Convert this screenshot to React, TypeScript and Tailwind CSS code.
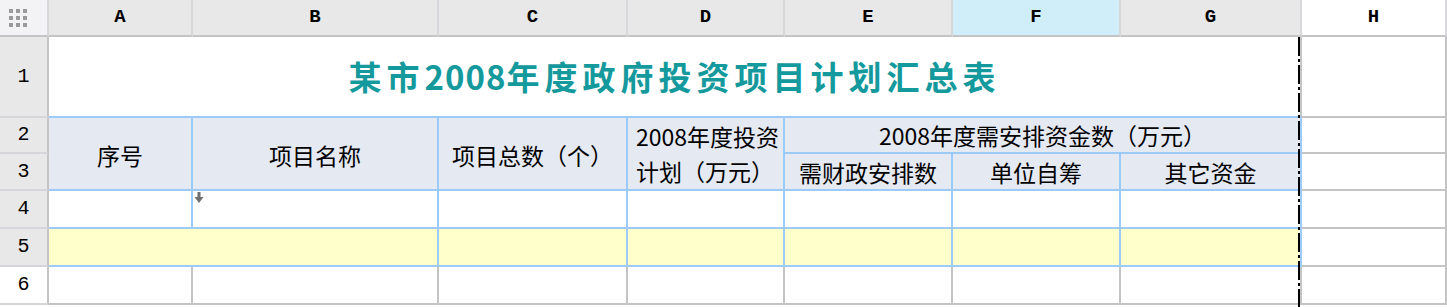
import React from 'react';

const cjk = '"Noto Sans CJK SC", "Noto Sans", sans-serif';
const mono = '"Liberation Mono", "Courier New", monospace';

// column header cells
function ColHead({ label, active, plain }: { label: string; active?: boolean; plain?: boolean }) {
  const bg = active ? 'bg-[#cfeefa]' : plain ? 'bg-white' : 'bg-[#e8e8e8]';
  return (
    <div
      className={`${bg} flex items-center justify-center border-r-2 border-b-2 border-r-[#d8d8dc] border-b-[#c4c4c4] text-[19px] font-bold text-black`}
      style={{ fontFamily: mono }}
    >
      {label}
    </div>
  );
}

function RowHead({ n, white }: { n: number; white?: boolean }) {
  return (
    <div
      className={`${white ? 'bg-white' : 'bg-[#e8e8e8]'} col-start-1 flex items-center justify-center border-r-2 border-b-2 border-r-[#c4c4c4] border-b-[#d6d6da] text-[20px] text-black`}
      style={{ fontFamily: mono, gridRow: n + 1 }}
    >
      {n}
    </div>
  );
}

const blue = 'border-r-2 border-b-2 border-[#9ccbfa]';
const gray = 'border-r-2 border-b-2 border-[#c4c4c4]';
const head = `bg-[#e5e9f2] ${blue} flex items-center justify-center text-[23px] text-black leading-none`;

function DownMark() {
  return (
    <svg width="10" height="12" viewBox="0 0 10 12" className="absolute left-[1px] top-[1px]">
      <rect x="3.5" y="0" width="3" height="6" fill="#6f6f6f" />
      <polygon points="0.5,5 9.5,5 5,11" fill="#6f6f6f" />
    </svg>
  );
}

export default function App() {
  return (
    <div className="relative w-[1447px] h-[307px] overflow-hidden bg-white" style={{ fontFamily: cjk }}>
      <div className="grid grid-cols-[49px_144px_246px_189px_157px_168px_168px_181px_145px_4px] grid-rows-[37px_81px_36px_37px_38px_38px_38px_4px]">
        {/* corner */}
        <div className="bg-[#f3f3f5] flex items-center pl-[9px] border-r-2 border-b-2 border-r-[#d8d8dc] border-b-[#c4c4c4]">
          <div className="grid grid-cols-3 gap-[3px]">
            {Array.from({ length: 9 }).map((_, i) => (
              <div key={i} className="w-[4px] h-[4px] bg-[#9a9a9a]" />
            ))}
          </div>
        </div>
        <ColHead label="A" />
        <ColHead label="B" />
        <ColHead label="C" />
        <ColHead label="D" />
        <ColHead label="E" />
        <ColHead label="F" active />
        <ColHead label="G" />
        <ColHead label="H" plain />
        <div className="bg-white border-b-2 border-[#c4c4c4]" />

        <RowHead n={1} />
        <RowHead n={2} />
        <RowHead n={3} />
        <RowHead n={4} />
        <RowHead n={5} />
        <RowHead n={6} white />

        {/* row 1: title */}
        <div className="col-start-2 col-span-7 row-start-2 flex items-center justify-center border-b-2 border-b-[#9ccbfa] border-r-2 border-r-[#c4c4c4]">
          <span className="text-[33px] font-bold tracking-[5px] text-[#14999c]">
            某市<span className="tracking-[1px]">2008</span>年度政府投资项目计划汇总表
          </span>
        </div>
        <div className={`col-start-9 row-start-2 ${gray}`} />

        {/* rows 2-3: headers */}
        <div className={`col-start-2 row-start-3 row-span-2 pt-[4px] ${head}`}>序号</div>
        <div className={`col-start-3 row-start-3 row-span-2 pt-[4px] ${head}`}>项目名称</div>
        <div className={`col-start-4 row-start-3 row-span-2 pt-[4px] ${head}`}>项目总数（个）</div>
        <div className={`col-start-5 row-start-3 row-span-2 bg-[#e5e9f2] ${blue} pl-[8px] pt-[1px] text-[23px] leading-[35px] text-black whitespace-nowrap`}>
          <div>2008年度投资</div>
          <div>计划（万元）</div>
        </div>
        <div className={`col-start-6 col-span-3 row-start-3 ${head}`}>2008年度需安排资金数（万元）</div>
        <div className={`col-start-6 row-start-4 pt-[2px] ${head}`}>需财政安排数</div>
        <div className={`col-start-7 row-start-4 pt-[2px] ${head}`}>单位自筹</div>
        <div className={`col-start-8 row-start-4 pt-[2px] ${head}`}>其它资金</div>
        <div className={`col-start-9 row-start-3 ${gray}`} />
        <div className={`col-start-9 row-start-4 ${gray}`} />

        {/* row 4 */}
        <div className={`col-start-2 row-start-5 ${blue}`} />
        <div className={`col-start-3 row-start-5 relative ${blue}`}>
          <DownMark />
        </div>
        <div className={`col-start-4 row-start-5 ${blue}`} />
        <div className={`col-start-5 row-start-5 ${blue}`} />
        <div className={`col-start-6 row-start-5 ${blue}`} />
        <div className={`col-start-7 row-start-5 ${blue}`} />
        <div className={`col-start-8 row-start-5 ${blue}`} />
        <div className={`col-start-9 row-start-5 ${gray}`} />

        {/* row 5 */}
        <div className={`col-start-2 col-span-2 row-start-6 bg-[#ffffcc] ${blue}`} />
        <div className={`col-start-4 row-start-6 bg-[#ffffcc] ${blue}`} />
        <div className={`col-start-5 row-start-6 bg-[#ffffcc] ${blue}`} />
        <div className={`col-start-6 row-start-6 bg-[#ffffcc] ${blue}`} />
        <div className={`col-start-7 row-start-6 bg-[#ffffcc] ${blue}`} />
        <div className={`col-start-8 row-start-6 bg-[#ffffcc] ${blue}`} />
        <div className={`col-start-9 row-start-6 ${gray}`} />

        {/* row 6 */}
        <div className={`col-start-2 row-start-7 ${gray}`} />
        <div className={`col-start-3 row-start-7 ${gray}`} />
        <div className={`col-start-4 row-start-7 ${gray}`} />
        <div className={`col-start-5 row-start-7 ${gray}`} />
        <div className={`col-start-6 row-start-7 ${gray}`} />
        <div className={`col-start-7 row-start-7 ${gray}`} />
        <div className={`col-start-8 row-start-7 ${gray}`} />
        <div className={`col-start-9 row-start-7 ${gray}`} />
      </div>

      {/* page break marker */}
      <div className="absolute left-[1298px] top-[37px] bottom-0 w-[2px] bg-[repeating-linear-gradient(to_bottom,#000_0_19px,transparent_19px_22px,#000_22px_25px,transparent_25px_28px)]" />
    </div>
  );
}
